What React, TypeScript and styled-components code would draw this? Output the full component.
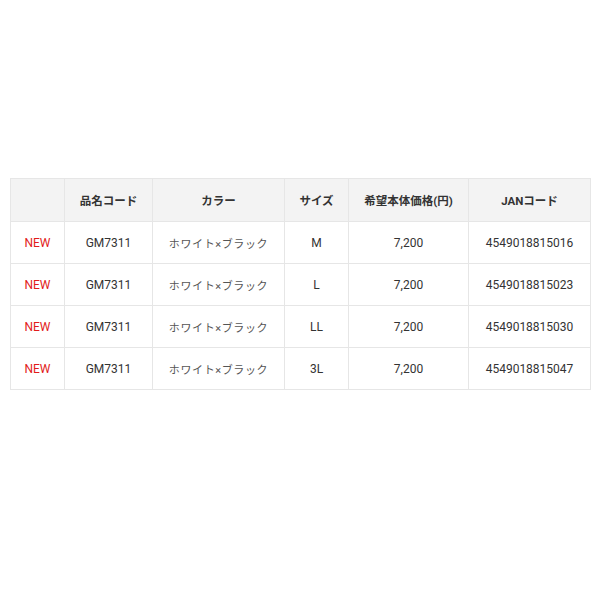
import React from "react";
import styled, { createGlobalStyle } from "styled-components";

const GlobalStyle = createGlobalStyle`
	body {
		margin: 0;
		background: #ffffff;
		font-family: Roboto, "Noto Sans CJK JP", sans-serif;
	}
`;

const Page = styled.div`
	padding: 178px 10px 0;
`;

const Table = styled.table`
	width: 580px;
	border-collapse: collapse;
	table-layout: fixed;
	font-size: 12px;
	color: #333333;
`;

const HeadCell = styled.th`
	background: #f3f3f3;
	border: 1px solid #e6e6e6;
	height: 42px;
	padding: 0;
	font-size: 11.5px;
	font-weight: bold;
	text-align: center;
	font-family: Roboto, "Noto Sans CJK JP", sans-serif;
`;

const Cell = styled.td<{ $tone?: "new" | "kana" }>`
	border: 1px solid #e6e6e6;
	height: 41px;
	padding: 0;
	text-align: center;
	color: ${(p) => (p.$tone === "new" ? "#e21b1b" : p.$tone === "kana" ? "#555555" : "#333333")};
	letter-spacing: ${(p) => (p.$tone === "kana" ? "0.6px" : "0")};
	font-size: ${(p) => (p.$tone === "kana" ? "11px" : "12px")};
`;

const columns = [
	{ label: "", width: 54 },
	{ label: "品名コード", width: 88 },
	{ label: "カラー", width: 132 },
	{ label: "サイズ", width: 64 },
	{ label: "希望本体価格(円)", width: 120 },
	{ label: "JANコード", width: 122 },
];

const rows = [
	{ size: "M", jan: "4549018815016" },
	{ size: "L", jan: "4549018815023" },
	{ size: "LL", jan: "4549018815030" },
	{ size: "3L", jan: "4549018815047" },
];

const App = () => {
	return (
		<Page>
			<GlobalStyle />
			<Table>
				<colgroup>
					{columns.map((c, i) => (
						<col key={i} style={{ width: c.width }} />
					))}
				</colgroup>
				<thead>
					<tr>
						{columns.map((c, i) => (
							<HeadCell key={i}>{c.label}</HeadCell>
						))}
					</tr>
				</thead>
				<tbody>
					{rows.map((r) => (
						<tr key={r.jan}>
							<Cell $tone="new">NEW</Cell>
							<Cell>GM7311</Cell>
							<Cell $tone="kana">ホワイト×ブラック</Cell>
							<Cell>{r.size}</Cell>
							<Cell>7,200</Cell>
							<Cell>{r.jan}</Cell>
						</tr>
					))}
				</tbody>
			</Table>
		</Page>
	);
};

export default App;
